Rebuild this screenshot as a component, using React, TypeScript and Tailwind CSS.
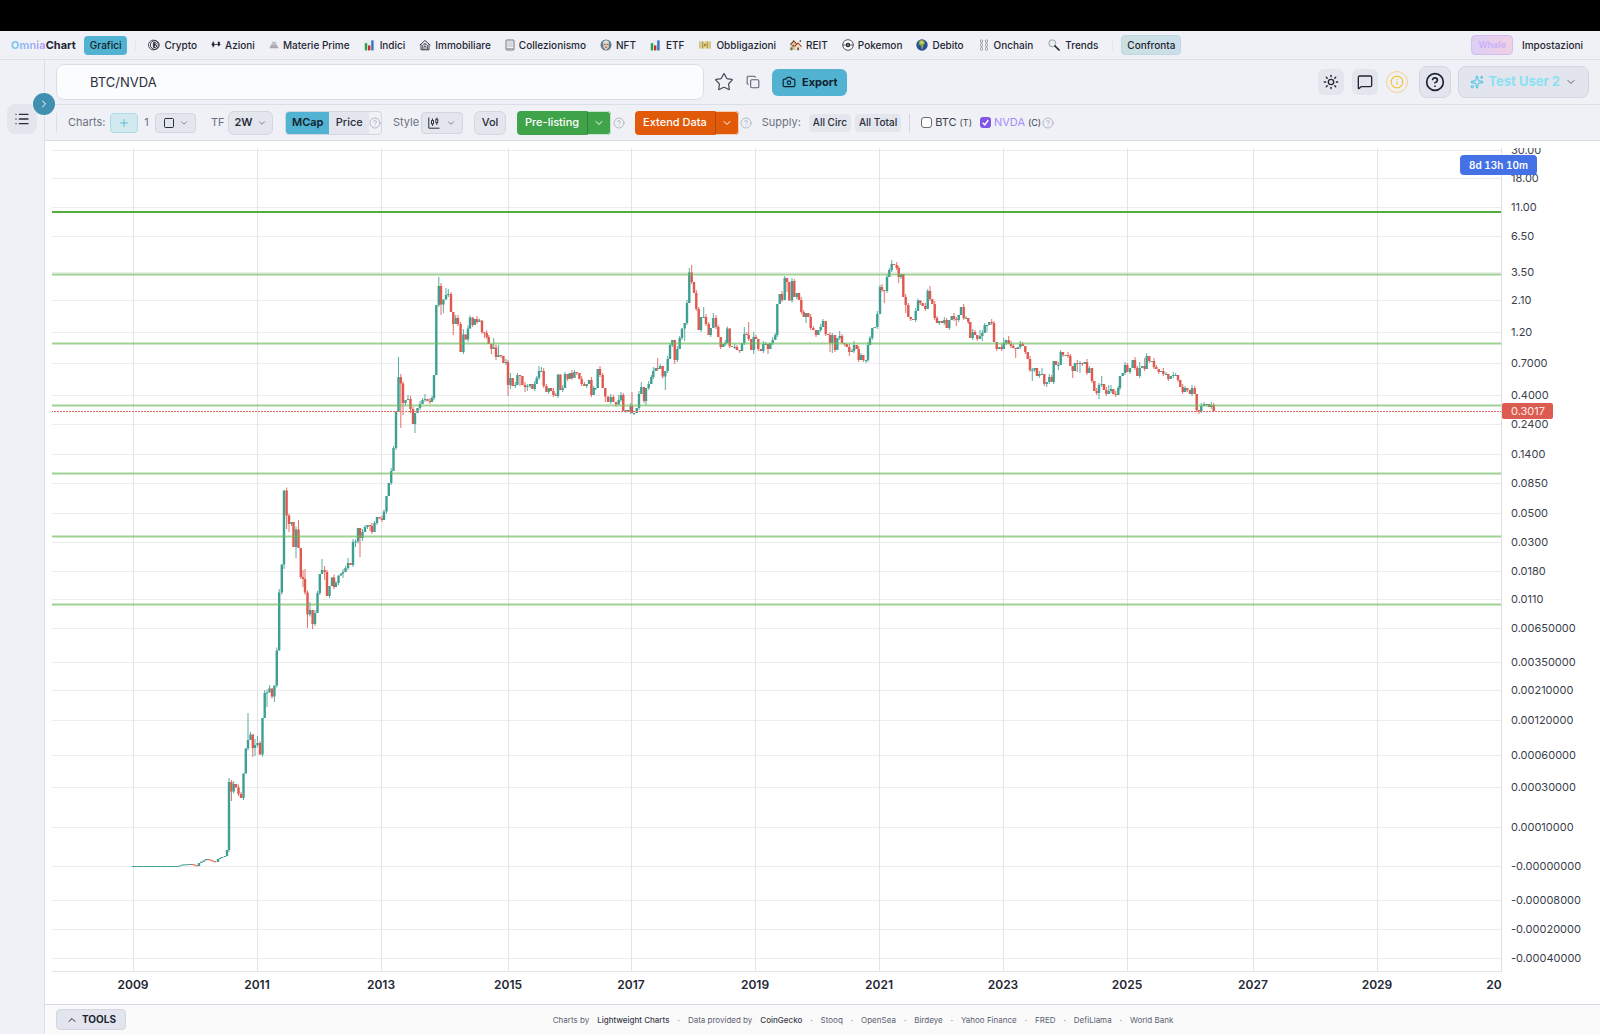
import React from 'react';
import {
  Camera,
  ChevronDown,
  ChevronRight,
  ChevronUp,
  CircleHelp,
  Copy,
  Info,
  List,
  MessageSquare,
  Plus,
  Sparkles,
  Square,
  Star,
  Sun,
} from 'lucide-react';

/* ---------- small pictograms for the market menu ---------- */

const Pic = ({ children, wide = false }: { children: React.ReactNode; wide?: boolean }) => (
  <svg viewBox="0 0 12 12" className={wide ? 'h-3 w-[14px] shrink-0' : 'size-3 shrink-0'} fill="none" aria-hidden="true">
    {children}
  </svg>
);

const NarrowPic = ({ children }: { children: React.ReactNode }) => (
  <svg viewBox="0 0 10 12" className="h-3 w-[10px] shrink-0" fill="none" aria-hidden="true">
    {children}
  </svg>
);

const CoinPic = () => (
  <Pic>
    <circle cx="5.4" cy="6" r="4.9" stroke="#2b2b38" strokeWidth="0.8" />
    <circle cx="6.8" cy="6" r="4.4" stroke="#2b2b38" strokeWidth="0.9" />
    <path d="M5.4 3.6h1.7a1.1 1.1 0 0 1 0 2.3H5.4zm0 2.3h2a1.2 1.2 0 0 1 0 2.5h-2zM6.3 2.8v6.4" stroke="#2b2b38" strokeWidth="0.9" />
  </Pic>
);
const CandlePic = () => (
  <NarrowPic>
    <path d="M2.2 2.4v6M7.8 2.4v5" stroke="#1f2030" strokeWidth="0.8" />
    <path d="M1.3 3.6h2v3.6h-2zM6.8 3h2v3.6h-2zM.4 5.2h9.2v.8H.4z" fill="#1f2030" />
  </NarrowPic>
);
const IngotPic = () => (
  <NarrowPic>
    <path d="M3.4 2.8h3.2l.9 2.6h-5z" fill="#b9b9bd" />
    <path d="M2.3 5.6h5.4l1.9 3.7H.4z" fill="#a3a3a8" />
    <path d="M2 6.9h6M3 4.6h4" stroke="#d5d5d8" strokeWidth="0.5" />
  </NarrowPic>
);
const BarsPic = () => (
  <Pic>
    <path d="M.4.6h10v10.8H.4z" fill="#e9ecf2" />
    <path d="M.8 4.2h2.4v7.2H.8z" fill="#27a243" />
    <path d="M4 6.4h2.4v5H4z" fill="#d32a2a" />
    <path d="M7.2 1.4h2.4v10H7.2z" fill="#2f78c4" />
  </Pic>
);
const HousePic = () => (
  <Pic>
    <path d="M.7 6.2 6 1.5l5.3 4.7M2 5.4v5.4h8V5.4" stroke="#2b2b38" strokeWidth="0.9" />
    <path d="M3.5 6.3 6 4.2l2.5 2.1v4.2M3.6 6.2v4.4M5 10.6V7.4h2v3.2M5 5.9h2" stroke="#2b2b38" strokeWidth="0.7" />
  </Pic>
);
const CardPic = () => (
  <NarrowPic>
    <rect x="1" y="1" width="8" height="10" rx="0.8" stroke="#55565f" strokeWidth="0.8" fill="#f0f1f4" />
    <rect x="2.2" y="2.2" width="5.6" height="5.8" fill="#d3d5da" />
    <path d="M2.2 9.6h5.6" stroke="#55565f" strokeWidth="0.8" strokeDasharray="1 .5" />
  </NarrowPic>
);
const ApePic = () => (
  <Pic>
    <circle cx="6" cy="6" r="5.5" fill="#5a7d8f" />
    <path d="M3.2 4.6c0-4 5.6-4 5.6 0v4L6 11.2 3.2 8.6z" fill="#e3c8bb" />
    <path d="M2.6 4.6C3 .4 9 .4 9.4 4.6L8.2 3.6H3.8z" fill="#dfe5ea" />
    <path d="M4 5.5h1.5M6.6 5.5h1.5M4.9 8.2h2.2" stroke="#5a3a34" strokeWidth="0.7" />
  </Pic>
);
const NotePic = () => (
  <Pic wide>
    <path d="M.2 2.5h11.6v7H.2z" fill="#e8d57a" />
    <path d="M3.2 2.5h1v7h-1zM7.8 2.5h1v7h-1z" fill="#8e8a6a" />
    <path d="M.2 2.5h1.3v7H.2zM10.5 2.5h1.3v7h-1.3z" fill="#c2bea6" />
    <circle cx="6" cy="6" r="1.2" fill="#a8873a" />
  </Pic>
);
const VillagePic = () => (
  <Pic>
    <path d="M.4 5 3.8 1.4 7 4.8v6H1z" fill="#d9c09b" />
    <path d="M0 5.2 3.8.9l3.5 4L6.5 5.5 3.8 2.6.9 5.9z" fill="#7c3a2b" />
    <path d="M4.8 7 8 3.8l3.3 3.3v4H5.3z" fill="#efe0c6" />
    <path d="M4.2 7.3 8 3.2l3.9 4-.8.7L8 4.8 5 8z" fill="#a5412f" />
    <path d="M7.3 8.4h1.5v2.8H7.3zM2.5 6h1.3v1.5H2.5z" fill="#54382c" />
    <path d="M.3 8.5h2.2v2.8H.3zM9.6 1h1.5v2H9.6z" fill="#5b7b42" />
  </Pic>
);
const BallPic = () => (
  <Pic>
    <circle cx="6" cy="6" r="5.3" stroke="#2b2b38" strokeWidth="0.8" fill="#fafafd" />
    <path d="M.8 6h2.8M8.4 6h2.8" stroke="#2b2b38" strokeWidth="0.8" />
    <circle cx="6" cy="6" r="2.3" fill="#2b2b38" />
    <circle cx="6" cy="6" r="0.7" fill="#fff" />
  </Pic>
);
const GlobePic = () => (
  <Pic>
    <circle cx="6" cy="6" r="5.7" fill="#2c4aa0" />
    <path d="M3 2c2-1.4 4.4-1 5.3 0l.7 2.5L7.6 6l-.5 3-1.4 1.5L4.9 7 2.5 5.4z" fill="#7bab3c" />
    <path d="M4 2.3 6.5 2 8 4 6.3 5.3 4 4.5z" fill="#d8c767" />
  </Pic>
);
const ChainPic = () => (
  <Pic>
    <g stroke="#85868f" strokeWidth="0.8">
      <rect x="2.5" y="0.8" width="2" height="3" rx="1" />
      <rect x="2.5" y="4.6" width="2" height="3" rx="1" />
      <rect x="2.5" y="8.4" width="2" height="3" rx="1" />
      <rect x="7.5" y="0.8" width="2" height="3" rx="1" />
      <rect x="7.5" y="4.6" width="2" height="3" rx="1" />
      <rect x="7.5" y="8.4" width="2" height="3" rx="1" />
    </g>
  </Pic>
);
const LensPic = () => (
  <Pic wide>
    <circle cx="4.3" cy="4.3" r="3.5" stroke="#8b8d96" strokeWidth="0.8" fill="#e4eef4" />
    <path d="m7 7 4 4" stroke="#26262e" strokeWidth="1.7" strokeLinecap="round" />
  </Pic>
);

const MARKETS: [string, React.FC][] = [
  ['Crypto', CoinPic],
  ['Azioni', CandlePic],
  ['Materie Prime', IngotPic],
  ['Indici', BarsPic],
  ['Immobiliare', HousePic],
  ['Collezionismo', CardPic],
  ['NFT', ApePic],
  ['ETF', BarsPic],
  ['Obbligazioni', NotePic],
  ['REIT', VillagePic],
  ['Pokemon', BallPic],
  ['Debito', GlobePic],
  ['Onchain', ChainPic],
  ['Trends', LensPic],
];

/* ---------- chart data ---------- */

const LEFT = 52;
const TOP = 148;

const PRICE_TICKS: [string, number][] = [
  ['30.00', 150], ['18.00', 178], ['11.00', 207], ['6.50', 236], ['3.50', 272], ['2.10', 300],
  ['1.20', 332], ['0.7000', 363], ['0.4000', 395], ['0.2400', 424], ['0.1400', 454], ['0.0850', 483],
  ['0.0500', 513], ['0.0300', 542], ['0.0180', 571], ['0.0110', 599], ['0.00650000', 628],
  ['0.00350000', 662], ['0.00210000', 690], ['0.00120000', 720], ['0.00060000', 755],
  ['0.00030000', 787], ['0.00010000', 827], ['-0.00000000', 866], ['-0.00008000', 900],
  ['-0.00020000', 929], ['-0.00040000', 958],
];

const YEAR_TICKS: [string, number][] = [
  ['2009', 133], ['2011', 257], ['2013', 381], ['2015', 508], ['2017', 631], ['2019', 755],
  ['2021', 879], ['2023', 1003], ['2025', 1127], ['2027', 1253], ['2029', 1377],
];

const LEVELS = [274, 343, 405, 473, 536, 604];
const LAST_PRICE_Y = 411;

// closing points as "x y", optionally followed by "h<top>" and "l<bottom>" of the wick
const CLOSES = `
133 866|178 866|183 864.5|190 864|197 866|199 863|206 859|215 862|218 859|222 857|225 856|227 850|229 782 h778|231.4 791.5 l801
233.7 784 h781|236 787.5|238.5 794|241 798|243.5 773.5|245.8 748.5|248 740 h713|250.5 734.5 h732|252.8 748 l757
255 745 h739 l756|257.5 743 h736|260 754.5|262.5 718|264.7 693 h690|267 692.5 l707|269.5 688.5 h685|272 696.5
274.4 685.5 l702|276.8 650.5|279.2 592.5 h589|281.8 564.5|284 490.5 l569|286.6 515.5 l529|289 524 l532|291.5 522
293.5 547|296 529.5 l558|298.5 548 h520|300.8 577|303 579 h570 l587|305 592.5 h569|307.5 614.5 l628|310 610 h602
312.6 624 l629|315 613|317.5 593|319.8 574|322 570 h559|324.6 572 h566 l580|327 596|329.5 586 l598|332 577.5|334 587
336 583|338.5 575.5|341 573.5|343 572 l578|345.5 568|348 563 h558|350.5 565|353 542|355.5 541.5 l547|358 528
360 538 l557|362.5 532 l541|365 527|367.5 525|370 526 l531|372 532|374.5 523|377 517|379.5 518.5|382 520|384 511.5
386.5 496|388.8 483|391.2 471|393.5 448|396 411.5|398.5 377 h357|400.8 383.5 l428|403 403 l415|405.5 400|408 399 h395
410.5 409 l413|413 424|415 413 l433|417.5 408|420 404|422.5 400|425 399 h394|427.5 401|430 402|432 398|434 375
436.3 305|438.8 286 h277|441 304.5 h283 l315|443.4 299.5 l313|446 295 h288|448.3 294 h289|451 312
453.3 324 l335|455.7 318 h315|458 324|460.6 352|463.4 334.5 h329|465.7 339.5|468 328.5|470 317.5|472.7 325|474.7 319
477 322|479.4 320.5|482 332|484.4 333 l338|486.7 337|488.7 344|491.4 349 l354|493.7 347.5 h338|496 357 l360
498.4 355 h345|501 356|503.4 363|506 362|508 385 l396|510.4 378 h373 l389|512.7 386|515.3 385|517.4 375|520 376 l386
522.4 385|525 387 l392|527.3 386 l391|530 384|532.4 389|534.7 384|536.7 378|539 371 h366|541.4 371 h367|543.7 386
546.4 392|548.7 388|551 391|553.4 395|555.7 396|558 374.5|560.4 390|562.7 388|565 374|567.7 379|570 373|572 378
574.4 372|576.7 373|579.4 379|581.7 384|584.4 386|586.7 384|589 380|591.4 395|593.7 388|595.4 388|597.7 369
600 375|602.7 388|605.3 396.5 l402|608 402|610.7 397|613.3 402|616 404.5|618.7 400 h395|621 395|623.3 411|626 410
628.3 412|630.7 406|632 413 h392|634 413|636.7 408|639 394|641.3 387 h382|644 401|646 388 l405|648.7 384|651.3 377
653.3 371 h367|655.7 368|657.7 369 h358|660.3 366|662.7 376.5|665.3 371 l390|667.7 359|670 345|672.3 340|674.7 360 l364
677.3 349|679.7 338|682 328.5|684.7 323 l341|687 303|689.3 272.5 h268|691.7 282 h265|694 293|696.3 309|698.7 330
701 317|703.7 317 h307|706 324|708.7 335|710.7 328|713.3 318 h313|716 327|718.3 337|720.7 347|723.3 344|725.3 343
727.3 328.5|729.7 346|732 347|734.7 347|737 350|739.7 351|742 343|744.3 334 h327|746.7 335|748.7 339 h322
751.3 350|753.7 337 h332 l354|756 339|758.3 349|761 351|763.3 344|765.7 344|768 349 l354|770.3 343|772.7 340|775.3 335
777.3 304|779.7 294|782 300|784.7 278|787 282 l292|789.3 300.5|792 281|794.3 297|796.7 293|799 300|801.3 312|803.7 317
806 313 l323|808.3 317|810.7 328|813.3 330|816 335|818.3 330|820.7 327|823 321|825.7 334|828 335|830 343 l352
832.3 335 l353|835 350|837.3 338|839.7 336 h331|842 343|844.3 344|846.7 347|849.3 352 l356|852 351|854 345 h341
856.7 349|858.7 360|861 355|863.3 360|866 360 l363|868 345|870 338|872.3 328|874.7 327|877.3 314|880 287|882 290 h284
884.3 291 l303|887 277|889.3 270|891.7 264 h260|894 265|896.7 268|898.7 277 l283|901 274|903.3 297|905.7 305 l313
908.3 317|910.7 319|913.3 320|915.7 311|918 300.5|920.3 303|922.7 306|925.3 309|927.7 291|930 299 h286
932.3 304|934.7 318|937 323|939.3 321|942 323|944.3 320|946.7 328|949.3 320|951.7 316|954 319|956.3 320 l326
958.7 315|961 307|963.7 318|966 318|968.3 322|970.3 338|972.7 332|975 335|977.3 339|980 336 h330|982.3 333 l341
984.7 325|987 325 l332|989.3 322|991.7 323|994 342|996.7 349|999.3 347|1001.7 349|1003.7 343 h338|1006 340|1008.7 344 h336
1011 346|1013.3 348|1015.7 349 l358|1018 347|1020.3 344|1022.7 346 h342|1025.3 352|1027.7 359|1030 370|1032.3 370 l381
1034.7 368|1037 376|1039.3 374|1042 374 h368|1044.3 384|1046.7 382 l387|1049.3 377|1051.7 382|1053.7 361|1056 365
1058.3 365 l370|1060.7 352|1063 355|1065.7 355|1068 356|1070.3 366|1072.7 371 l378|1075 363|1077.3 364 l372|1080 363 l373
1082.3 364|1084.7 362|1087 373|1089.3 368|1092 381|1094.3 391|1096.7 393|1099 385 l399|1101.7 384 h376|1104 390
1106.3 394|1108.7 391 h385|1111 389 h385|1113.3 394|1115.7 395|1118.3 388|1120 376|1122.7 373|1125 365 h362|1127.3 372
1130 368|1132.7 360|1135 368|1137.3 376|1139.7 368 h362|1142.3 366|1144.7 369 h358|1146.7 356 h353|1149.3 361|1151.7 361
1154 367|1156.3 369|1158.7 372|1161 371|1163.3 374|1166 374|1168.3 379|1170.7 376|1173.3 375|1175.7 375|1178 380
1180.3 387|1182.7 392|1185 388|1187.3 390|1190 394|1192 388|1194.7 394|1196.7 410|1199 411 l414|1201.3 406|1204 404 h402
1206.7 404|1209 407|1211.3 405|1213.7 411`;

type Candle = { x: number; open: number; close: number; high: number; low: number };

const buildCandles = (): Candle[] => {
  const step = 2.385;
  const out: Candle[] = [];
  let px = 130.6;
  let py = 866;
  CLOSES.trim()
    .split(/[|\n]/)
    .forEach((entry) => {
      const [xs, ys, ...wicks] = entry.trim().split(' ');
      const x = Number(xs);
      const y = Number(ys);
      const n = Math.max(1, Math.round((x - px) / step));
      for (let k = 1; k <= n; k++) {
        const open = py + ((y - py) * (k - 1)) / n;
        const close = py + ((y - py) * k) / n;
        const extra = x < 226 ? 0 : (out.length * 7) % 4;
        let high = Math.min(open, close) - (extra > 1 ? extra : 0);
        let low = Math.max(open, close) + (extra === 1 || extra === 3 ? 2 : 0);
        if (k === n) {
          wicks.forEach((w) => {
            const v = Number(w.slice(1));
            if (w[0] === 'h') high = v;
            else low = v;
          });
        }
        out.push({ x: px + ((x - px) * k) / n, open, close, high, low });
      }
      px = x;
      py = y;
    });
  return out;
};

const CANDLES = buildCandles();

const Chart = () => (
  <div className="flex min-h-0 flex-1 flex-col bg-white pl-[7px] pt-[7px]">
    <div className="relative flex min-h-0 flex-1">
      <div className="relative min-w-0 flex-1 border-b border-[#e2e3e8]">
        <svg className="absolute inset-0 size-full" role="img" aria-label="BTC/NVDA">
          <g transform={`translate(${-LEFT} ${-TOP})`}>
            {PRICE_TICKS.map(([t, y]) => (
              <line key={t} x1="0" x2="200%" y1={y + 0.5} y2={y + 0.5} stroke="#ececf0" />
            ))}
            {YEAR_TICKS.map(([t, x]) => (
              <line key={t} x1={x + 0.5} x2={x + 0.5} y1="0" y2="200%" stroke="#e5e5e9" />
            ))}
            {CANDLES.map((c, i) => {
              const color = c.close <= c.open ? '#3f9f93' : '#e0584e';
              const top = Math.min(c.open, c.close);
              return (
                <g key={i} fill={color}>
                  <rect x={c.x - 0.5} y={c.high} width="1" height={c.low - c.high} opacity="0.85" />
                  <rect x={c.x - 1.2} y={top} width="2.4" height={Math.max(1, Math.abs(c.close - c.open))} />
                </g>
              );
            })}
            <line x1="0" x2="200%" y1="212" y2="212" stroke="#56ab3f" strokeWidth="2" />
            {LEVELS.map((y) => (
              <line key={y} x1="0" x2="200%" y1={y + 0.5} y2={y + 0.5} stroke="#6dba58" strokeWidth="2" opacity="0.65" />
            ))}
            <line x1="0" x2="200%" y1={LAST_PRICE_Y + 0.5} y2={LAST_PRICE_Y + 0.5} stroke="#df6a5c" strokeDasharray="2 1" />
          </g>
        </svg>
      </div>
      <div className="relative w-[99px] shrink-0 border-l border-[#dfe0e6]">
        <svg className="absolute inset-0 size-full font-['Inter',sans-serif] text-[11px]">
          <g transform={`translate(0 ${-TOP})`}>
            {PRICE_TICKS.map(([t, y]) => (
              <text key={t} x="9" y={y + 4} fill="#3a3f4d">
                {t}
              </text>
            ))}
            <rect x="0" y="403" width="51" height="16" rx="2" fill="#dd5c52" />
            <text x="9" y={LAST_PRICE_Y + 4} fill="#ffe9e6">
              0.3017
            </text>
          </g>
        </svg>
      </div>
      <div className="absolute right-[63px] top-[7px] rounded bg-[#4571e6] px-[9px] text-[10px] font-semibold leading-5 tabular-nums text-white">
        8d 13h 10m
      </div>
    </div>
    <div className="flex h-8 shrink-0">
      <svg className="h-8 min-w-0 flex-1 font-['Inter',sans-serif] text-[12px] font-semibold">
        <g transform={`translate(${-LEFT} 0)`} fill="#232633" textAnchor="middle">
          {YEAR_TICKS.map(([t, x]) => (
            <text key={t} x={x} y="17">
              {t}
            </text>
          ))}
          <text x="1494" y="17">
            20
          </text>
        </g>
      </svg>
      <div className="w-[98px] shrink-0" />
    </div>
  </div>
);

/* ---------- toolbar ---------- */

const Help = () => (
  <button type="button" aria-label="Help" className="text-[#a3a6b2]">
    <CircleHelp className="size-3" strokeWidth={1.5} />
  </button>
);

const CandleStyleIcon = () => (
  <svg viewBox="0 0 12 12" className="size-3" fill="none" stroke="#2a2d3a" aria-hidden="true">
    <path d="M.8.5v10.7h10.7" />
    <path d="M4.5 1.5v7.5M8.800.5v7.5" strokeWidth="0.9" />
    <path d="M3.5 3.5h2V7h-2zM7.8 2.2h2v3.5h-2z" fill="#e4e6ee" />
  </svg>
);

const SplitButton = ({ label, tone }: { label: string; tone: string }) => (
  <div className={`flex h-6 overflow-hidden rounded ${tone}`}>
    <button type="button" className="px-2 text-[11px] font-medium text-white">
      {label}
    </button>
    <button
      type="button"
      aria-label={`${label} options`}
      className="flex w-6 items-center justify-center rounded-r border border-white/70 border-l-black/20 text-white"
    >
      <ChevronDown className="size-3" />
    </button>
  </div>
);

const Toolbar = () => (
  <div className="flex h-9 shrink-0 items-center border-b border-[#dcdee6] pl-[11px] text-[11px] text-[#6b7080]">
    <span className="mr-[11px] h-5 w-px bg-[#dcdee6]" />
    <span className="w-[42px]">Charts:</span>
    <button type="button" aria-label="Add chart" className="flex h-5 w-7 items-center justify-center rounded border border-[#a9dbe8] bg-[#d3e9f0] text-[#3badc9]">
      <Plus className="size-3" strokeWidth={1.5} />
    </button>
    <span className="w-[17px] text-center">1</span>
    <button type="button" aria-label="Layout" className="flex h-5 w-[41px] items-center justify-center gap-1 rounded border border-[#d3d6e0] bg-[#e4e6ee] text-[#2a2d3a]">
      <Square className="size-3" />
      <ChevronDown className="size-[10px] text-[#6b7080]" />
    </button>
    <span className="ml-[15px] w-[17px]">TF</span>
    <button type="button" className="flex h-6 w-[45px] items-center justify-center gap-1 rounded-md border border-[#d3d6e0] bg-[#e4e6ee] font-semibold text-[#2a2d3a]">
      2W
      <ChevronDown className="size-[10px] text-[#6b7080]" />
    </button>
    <div className="ml-3 flex h-6 w-[97px] items-center overflow-hidden rounded border border-[#d3d6e0]">
      <button type="button" className="h-full w-11 bg-[#52b2d1] font-semibold text-[#10222c]">
        MCap
      </button>
      <button type="button" className="h-full w-10 bg-[#e4e6ee] font-medium text-[#2a2d3a]">
        Price
      </button>
      <Help />
    </div>
    <span className="ml-[11px] w-7">Style</span>
    <button type="button" aria-label="Chart style" className="flex h-[22px] w-[42px] items-center justify-center gap-[6px] rounded border border-[#d3d6e0] bg-[#e4e6ee]">
      <CandleStyleIcon />
      <ChevronDown className="size-[10px] text-[#6b7080]" />
    </button>
    <button type="button" className="mx-[11px] h-6 w-8 rounded-md border border-[#d3d6e0] bg-[#e4e6ee] font-medium text-[#2a2d3a]">
      Vol
    </button>
    <SplitButton label="Pre-listing" tone="bg-[#3fa34a]" />
    <div className="ml-[2px] mr-[10px] flex">
      <Help />
    </div>
    <SplitButton label="Extend Data" tone="bg-[#e15a0a]" />
    <div className="ml-px mr-[10px] flex">
      <Help />
    </div>
    <span className="mr-2">Supply:</span>
    <button type="button" className="mr-1 h-[18px] rounded bg-[#e4e6ee] px-1 text-[10px] font-medium text-[#2a2d3a]">
      All Circ
    </button>
    <button type="button" className="h-[18px] rounded bg-[#e4e6ee] px-1 text-[10px] font-medium text-[#2a2d3a]">
      All Total
    </button>
    <span className="ml-2 mr-[11px] h-[18px] w-px bg-[#d3d6e0]" />
    <label className="mr-2 flex items-center gap-[3px] text-[#3a3f4d]">
      <input type="checkbox" className="size-[11px] appearance-none rounded-[3px] border border-[#6b6b70] bg-white" />
      BTC <span className="text-[9px]">(T)</span>
    </label>
    <label className="flex items-center gap-[3px] text-[#a78bfa]">
      <span className="relative flex">
        <input type="checkbox" defaultChecked className="size-[11px] appearance-none rounded-[3px] bg-[#7f56e6]" />
        <svg viewBox="0 0 11 11" className="pointer-events-none absolute inset-0 size-[11px]" fill="none" aria-hidden="true">
          <path d="M2.8 5.8 4.8 7.9 8.3 3" stroke="#fff" strokeWidth="1.5" />
        </svg>
      </span>
      NVDA <span className="text-[9px] text-[#3a3f4d]">(C)</span>
    </label>
    <div className="ml-px flex">
      <Help />
    </div>
  </div>
);

const Header = () => (
  <div className="flex h-[45px] shrink-0 items-center border-b border-[#dcdee6] px-[11px]">
    <input
      aria-label="Symbol"
      defaultValue="BTC/NVDA"
      className="h-9 w-[648px] rounded-lg border border-[#dcdee6] bg-[#fbfcfe] px-[33px] text-[13px] text-[#2a2d3a]"
    />
    <button type="button" aria-label="Favourite" className="ml-[10px] text-[#4a4f5e]">
      <Star className="size-5" strokeWidth={1.5} />
    </button>
    <button type="button" aria-label="Copy" className="ml-3 text-[#5a6070]">
      <Copy className="size-[14px]" strokeWidth={1.8} />
    </button>
    <button type="button" className="ml-3 flex h-[27px] items-center gap-[6px] rounded-md bg-[#52b2d1] px-[10px] text-[11px] font-bold text-[#10222c]">
      <Camera className="size-[14px]" />
      Export
    </button>
    <div className="ml-auto flex items-center">
      <button type="button" aria-label="Theme" className="mr-2 flex size-[26px] items-center justify-center rounded-md bg-[#e4e6ee] text-[#232633]">
        <Sun className="size-4" />
      </button>
      <button type="button" aria-label="Feedback" className="mr-2 flex size-[26px] items-center justify-center rounded-md bg-[#e4e6ee] text-[#232633]">
        <MessageSquare className="size-4" />
      </button>
      <button type="button" aria-label="Info" className="mr-[11px] flex size-[22px] items-center justify-center rounded-full border border-[#f5d08d] text-[#f2c230]">
        <Info className="size-[14px]" />
      </button>
      <button type="button" aria-label="Help" className="mr-[7px] flex size-8 items-center justify-center rounded-lg border border-[#d3d6e0] bg-[#e2e5ed] text-[#1d2030]">
        <CircleHelp className="size-5" />
      </button>
      <button type="button" className="flex h-8 items-center gap-1 rounded-lg border border-[#d3d6e0] bg-[#e2e5ed] px-[11px] text-[13px] font-bold text-[#8be0f4]">
        <Sparkles className="size-[14px] text-[#5cc9e4]" />
        Test User 2
        <ChevronDown className="ml-px size-3 text-[#5a6070]" />
      </button>
    </div>
  </div>
);

const Nav = () => (
  <nav className="flex h-[29px] shrink-0 items-center border-b border-[#dcdee6] px-[11px] text-[10px] font-medium text-[#232633]">
    <a href="#" className="mr-2 text-[11px] font-bold">
      <span className="bg-gradient-to-r from-[#67c8ec] to-[#b89cf6] bg-clip-text text-transparent">Omnia</span>
      <span>Chart</span>
    </a>
    <a href="#grafici" className="flex h-[19px] items-center rounded bg-[#52b2d1] px-[6px] text-[#10222c]">
      Grafici
    </a>
    <span className="ml-2 mr-3 h-3 w-px bg-[#e4e6ee]" />
    <div className="flex items-center gap-[14px]">
      {MARKETS.map(([name, Icon]) => (
        <a key={name} href={`#${name}`} className="flex items-center gap-1 whitespace-nowrap">
          <Icon />
          {name}
        </a>
      ))}
    </div>
    <span className="ml-[14px] mr-2 h-3 w-px bg-[#e4e6ee]" />
    <a href="#confronta" className="flex h-5 items-center rounded border border-[#bcd9e2] bg-gradient-to-r from-[#cde0e0] to-[#cbdfea] px-[5px]">
      Confronta
    </a>
    <span className="ml-auto mr-[9px] flex h-5 items-center rounded border border-[#d3bdf3] bg-gradient-to-r from-[#dccff5] to-[#f0d0e4] px-[6px] text-[9px] font-semibold text-[#c8b0fa]">
      Whale
    </span>
    <a href="#impostazioni" className="mr-[6px]">
      Impostazioni
    </a>
  </nav>
);

const CREDITS: string[] = ['Stooq', 'OpenSea', 'Birdeye', 'Yahoo Finance', 'FRED', 'DefiLlama', 'World Bank'];

const Footer = () => (
  <footer className="flex h-[30px] shrink-0 items-center border-t border-[#d6d9e3] bg-[#fafafb] pl-[11px]">
    <button type="button" className="flex h-[21px] items-center gap-1 rounded border border-[#d3d6e0] bg-[#e2e5ed] px-[9px] text-[10px] font-bold text-[#232633]">
      <ChevronUp className="size-3" />
      TOOLS
    </button>
    <div className="flex flex-1 items-center justify-center gap-2 text-[8px] text-[#5a6070]">
      <span>Charts by</span>
      <a href="#lightweight" className="font-medium text-[#3a3f4d]">Lightweight Charts</a>
      <span>·</span>
      <span>Data provided by</span>
      <a href="#coingecko" className="font-medium text-[#3a3f4d]">CoinGecko</a>
      {CREDITS.map((c) => (
        <React.Fragment key={c}>
          <span>·</span>
          <a href={`#${c}`}>{c}</a>
        </React.Fragment>
      ))}
    </div>
  </footer>
);

export default function App() {
  return (
    <div className="flex min-h-screen flex-col bg-[#f0f1f7] font-['Inter',sans-serif]">
      <div className="h-[31px] shrink-0 bg-black" />
      <Nav />
      <div className="flex min-h-0 flex-1">
        <aside className="relative w-[45px] shrink-0 border-r border-[#dcdee6]">
          <button type="button" aria-label="Watchlist" className="ml-[7px] mt-11 flex size-[30px] items-center justify-center rounded-lg bg-[#e4e6ee] text-[#2a2d3a]">
            <List className="size-4" />
          </button>
          <button
            type="button"
            aria-label="Expand sidebar"
            className="absolute -right-[11px] top-[33px] flex size-[22px] items-center justify-center rounded-full bg-[#3f8fb0] text-white"
          >
            <ChevronRight className="size-3" />
          </button>
        </aside>
        <main className="flex min-w-0 flex-1 flex-col">
          <Header />
          <Toolbar />
          <Chart />
          <Footer />
        </main>
      </div>
    </div>
  );
}
